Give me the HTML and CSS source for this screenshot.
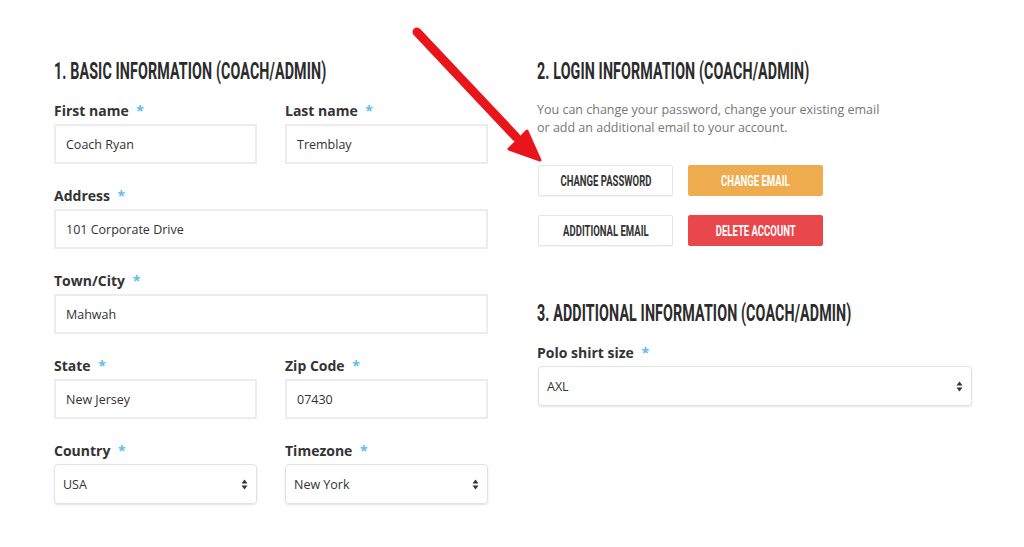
FILE: index.html
```html
<!DOCTYPE html>
<html>
<head>
<meta charset="utf-8">
<link rel="stylesheet" href="styles.css">
</head>
<body>
<div class="page">
  <section class="col col-left">
    <h2 class="title"><span class="narrow">1. Basic information (coach/admin)</span></h2>
    <div class="row">
      <div class="field">
        <label class="lbl">First name <span class="req">*</span></label>
        <div class="input">Coach Ryan</div>
      </div>
      <div class="field">
        <label class="lbl">Last name <span class="req">*</span></label>
        <div class="input">Tremblay</div>
      </div>
    </div>
    <div class="row">
      <div class="field">
        <label class="lbl">Address <span class="req">*</span></label>
        <div class="input">101 Corporate Drive</div>
      </div>
    </div>
    <div class="row">
      <div class="field">
        <label class="lbl">Town/City <span class="req">*</span></label>
        <div class="input">Mahwah</div>
      </div>
    </div>
    <div class="row">
      <div class="field">
        <label class="lbl">State <span class="req">*</span></label>
        <div class="input">New Jersey</div>
      </div>
      <div class="field">
        <label class="lbl">Zip Code <span class="req">*</span></label>
        <div class="input">07430</div>
      </div>
    </div>
    <div class="row">
      <div class="field">
        <label class="lbl">Country <span class="req">*</span></label>
        <div class="select"><span>USA</span><svg class="caret" width="7" height="11" viewBox="0 0 7 11"><path d="M3.5 0.5 L6.5 4.5 L0.5 4.5 Z M3.5 10.5 L6.5 6.5 L0.5 6.5 Z" fill="#333"/></svg></div>
      </div>
      <div class="field">
        <label class="lbl">Timezone <span class="req">*</span></label>
        <div class="select"><span>New York</span><svg class="caret" width="7" height="11" viewBox="0 0 7 11"><path d="M3.5 0.5 L6.5 4.5 L0.5 4.5 Z M3.5 10.5 L6.5 6.5 L0.5 6.5 Z" fill="#333"/></svg></div>
      </div>
    </div>
  </section>

  <section class="col col-right">
    <h2 class="title"><span class="narrow">2. Login information (coach/admin)</span></h2>
    <p class="desc">You can change your password, change your existing email<br>or add an additional email to your account.</p>
    <div class="btns">
      <button class="btn btn-white"><span class="btxt">Change password</span></button>
      <button class="btn btn-orange"><span class="btxt">Change email</span></button>
      <button class="btn btn-white"><span class="btxt">Additional email</span></button>
      <button class="btn btn-red"><span class="btxt">Delete account</span></button>
    </div>
    <h2 class="title title-3"><span class="narrow">3. Additional information (coach/admin)</span></h2>
    <div class="field">
      <label class="lbl">Polo shirt size <span class="req">*</span></label>
      <div class="select"><span>AXL</span><svg class="caret" width="7" height="11" viewBox="0 0 7 11"><path d="M3.5 0.5 L6.5 4.5 L0.5 4.5 Z M3.5 10.5 L6.5 6.5 L0.5 6.5 Z" fill="#333"/></svg></div>
    </div>
  </section>

  <svg class="arrow" width="160" height="160" viewBox="0 0 160 160">
    <line x1="19" y1="14" x2="118" y2="119" stroke="#e8151b" stroke-width="9" stroke-linecap="round"/>
    <path d="M142 142 L111 131 L129 113 Z" fill="#e8151b" stroke="#e8151b" stroke-width="3" stroke-linejoin="round"/>
  </svg>
</div>
</body>
</html>
```
FILE: styles.css
```css
* { box-sizing: border-box; }
html, body { margin: 0; padding: 0; background: #fff; }
body {
  font-family: "Open Sans", "Noto Sans", sans-serif;
  color: #333;
  width: 1024px;
  height: 547px;
  overflow: hidden;
}
.page {
  position: relative;
  display: flex;
  gap: 49px;
  padding: 58px 0 0 54px;
}
.col { display: flex; flex-direction: column; }
.col-left { width: 434px; }
.col-right { width: 435px; }

.title {
  margin: 0;
  height: 26px;
  font-family: "Roboto", "Liberation Sans", sans-serif;
  font-weight: 700;
  font-size: 24px;
  line-height: 26px;
  text-transform: uppercase;
  color: #2b2b2b;
  white-space: nowrap;
}
.narrow {
  display: inline-block;
  transform: scaleX(0.595);
  transform-origin: left center;
  letter-spacing: 0.2px;
}
.col-left .title { margin-bottom: 17px; }

.row { display: flex; gap: 28px; margin-bottom: 22px; }
.field { display: flex; flex-direction: column; flex: 1; }
.lbl {
  font-size: 14px;
  font-weight: 700;
  line-height: 19px;
  color: #333;
  margin-bottom: 4px;
}
.req { color: #5bc0ea; margin-left: 4px; }

.input {
  height: 40px;
  border: 2px solid #ececec;
  padding: 0 10px;
  display: flex;
  align-items: center;
  font-size: 12.5px;
  color: #333;
}
.select {
  height: 40px;
  border: 1px solid #e2e2e2;
  border-radius: 4px;
  box-shadow: 0 1px 2px rgba(0,0,0,0.12);
  padding: 0 8px;
  display: flex;
  align-items: center;
  justify-content: space-between;
  font-size: 12.5px;
  color: #333;
}

.desc {
  margin: 17px 0 28px;
  font-size: 12.5px;
  line-height: 18px;
  color: #777;
}
.btns {
  display: grid;
  grid-template-columns: 135px 135px;
  column-gap: 15px;
  row-gap: 19px;
  padding-left: 1px;
}
.btn {
  height: 31px;
  padding: 0;
  font-family: "Roboto", "Liberation Sans", sans-serif;
  font-weight: 700;
  font-size: 14px;
  text-transform: uppercase;
  border-radius: 2px;
  cursor: pointer;
  white-space: nowrap;
  overflow: visible;
}
.btxt {
  display: inline-block;
  transform: scaleX(0.68);
  transform-origin: center;
}
.btn-white { background: #fff; border: 1px solid #e6e6e6; color: #333; box-shadow: 0 1px 1px rgba(0,0,0,0.05); }
.btn-orange { background: #efac4e; border: 1px solid #efac4e; color: #fff; }
.btn-red { background: #e8484c; border: 1px solid #e8484c; color: #fff; }

.title-3 { margin-top: 54px; margin-bottom: 17px; }
.col-right .select { margin-left: 1px; }

.arrow {
  position: absolute;
  left: 398px;
  top: 18px;
}
```
